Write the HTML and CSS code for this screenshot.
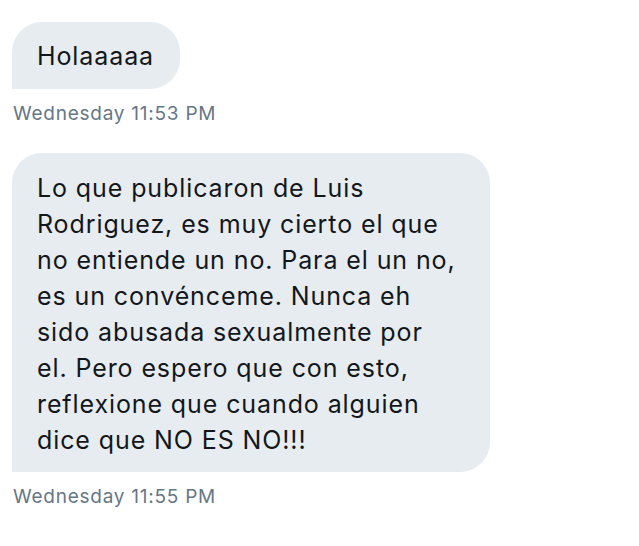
FILE: index.html
```html
<!DOCTYPE html>
<html lang="es">
<head>
<meta charset="utf-8">
<link rel="stylesheet" href="styles.css">
</head>
<body>
<div class="thread">
  <div class="msg">
    <div class="bubble bubble-short">Holaaaaa</div>
    <div class="time">Wednesday 11:53 PM</div>
  </div>
  <div class="msg">
    <div class="bubble bubble-long">Lo que publicaron de Luis<br>Rodriguez, es muy cierto el que<br>no entiende un no. Para el un no,<br>es un convénceme. Nunca eh<br>sido abusada sexualmente por<br>el. Pero espero que con esto,<br>reflexione que cuando alguien<br>dice que NO ES NO!!!</div>
    <div class="time">Wednesday 11:55 PM</div>
  </div>
</div>
</body>
</html>
```

FILE: styles.css
```css
html, body {
  margin: 0;
  padding: 0;
  background: #ffffff;
}
body {
  font-family: Inter, "Liberation Sans", Arial, sans-serif;
  color: #14171a;
}
.thread {
  display: flex;
  flex-direction: column;
  gap: 28px;
  padding: 22px 0 0 12px;
}
.msg {
  display: flex;
  flex-direction: column;
  align-items: flex-start;
}
.bubble {
  background: #e6ecf0;
  font-size: 25px;
  line-height: 36px;
  letter-spacing: 0.9px;
  border-radius: 30px 30px 30px 0;
  box-sizing: border-box;
}
.bubble-short {
  width: 168px;
  height: 67px;
  padding: 16px 20px 15px 25px;
}
.bubble-long {
  width: 478px;
  height: 319px;
  padding: 17px 20px 14px 25px;
  white-space: nowrap;
}
.time {
  margin-top: 14px;
  margin-left: 1px;
  font-size: 19px;
  line-height: 22px;
  letter-spacing: 0.75px;
  color: #657786;
}
```
